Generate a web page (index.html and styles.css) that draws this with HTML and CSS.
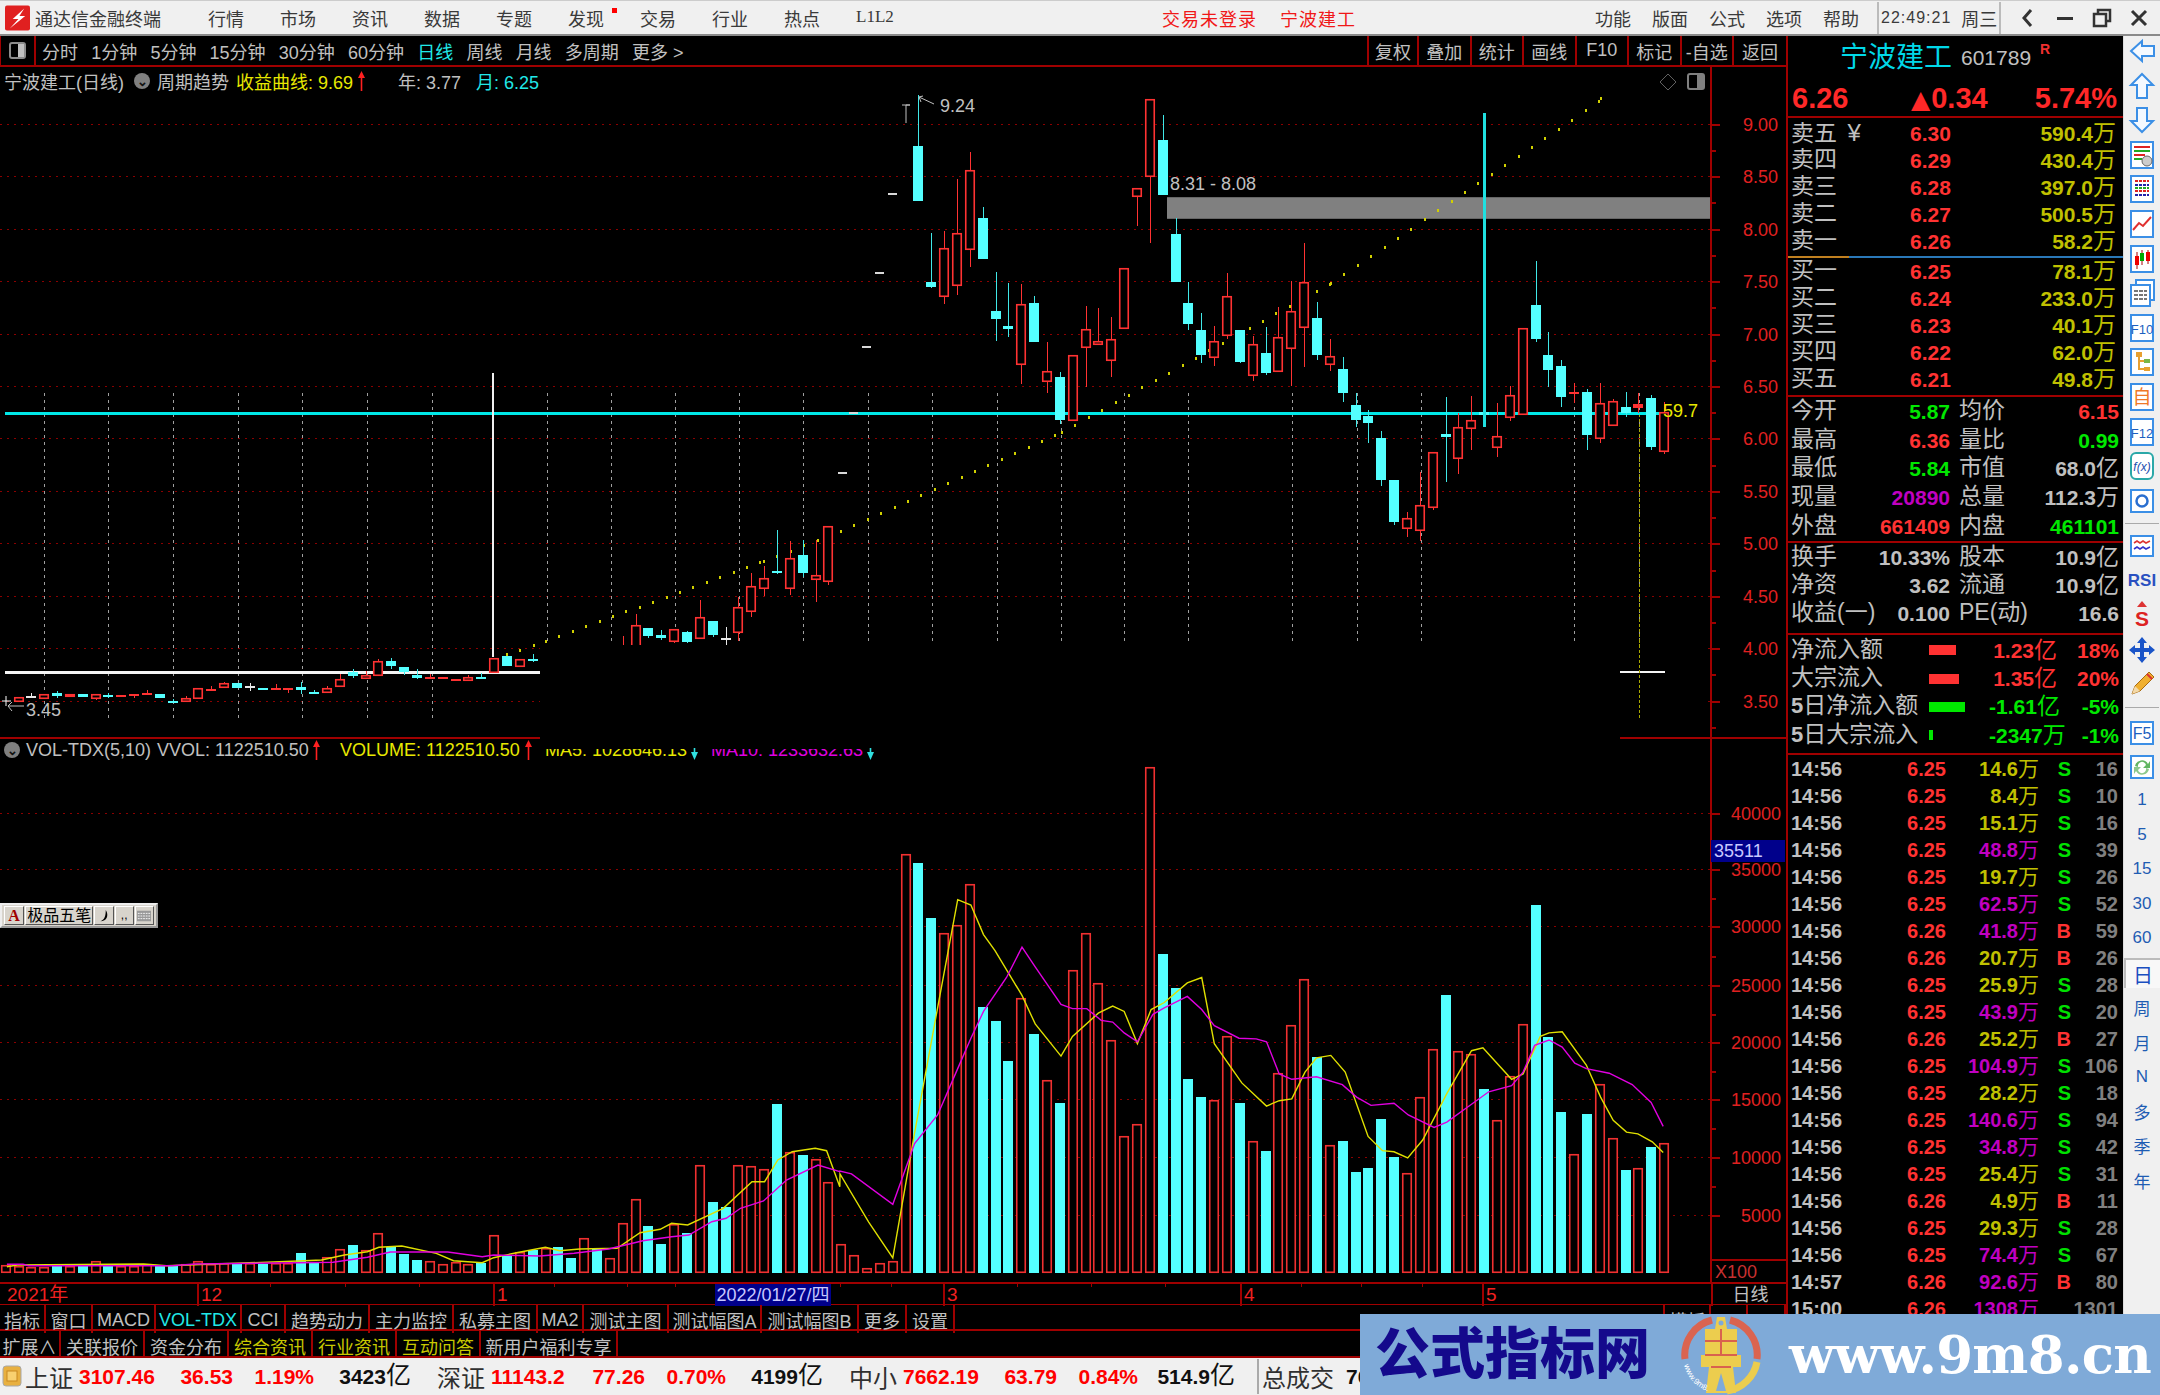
FILE: index.html
```html
<!DOCTYPE html>
<html lang="zh-CN">
<head>
<meta charset="utf-8">
<title>通达信金融终端</title>
<link rel="stylesheet" href="styles.css">
</head>
<body>
<div class="app">
  <header class="titlebar">
    <svg class="logo" viewBox="0 0 26 26"><rect width="26" height="26" rx="2" fill="#e02020"/><path d="M20 3 L8 14 L14 14 L5 24 L21 11 L15 11 Z" fill="#fff"/></svg>
    <span class="brand">通达信金融终端</span>
    <nav class="menus">
      <span>行情</span><span>市场</span><span>资讯</span><span>数据</span><span>专题</span><span class="has-dot">发现<i class="dot"></i></span><span>交易</span><span>行业</span><span>热点</span><span class="serif">L1L2</span>
    </nav>
    <span class="red-title first">交易未登录</span>
    <span class="red-title">宁波建工</span>
    <nav class="menus right">
      <span>功能</span><span>版面</span><span>公式</span><span>选项</span><span>帮助</span>
    </nav>
    <div class="clock"><span class="time">22:49:21</span><span>周三</span></div>
    <div class="winctl">
      <svg viewBox="0 0 20 20"><path d="M13 2 L6 10 L13 18" fill="none" stroke="#333" stroke-width="3"/></svg>
      <svg viewBox="0 0 20 20"><rect x="2" y="9" width="16" height="3" fill="#333"/></svg>
      <svg viewBox="0 0 20 20"><path d="M6 6 V2 H18 V13 H14 M2 6 H14 V18 H2 Z" fill="none" stroke="#333" stroke-width="2.5"/></svg>
      <svg viewBox="0 0 20 20"><path d="M3 3 L17 17 M17 3 L3 17" stroke="#333" stroke-width="3"/></svg>
    </div>
  </header>

  <div class="main">
    <section class="pane">
      <div class="toolbar">
        <div class="tool-icon"><span class="panel-glyph"><i></i></span></div>
        <div class="periods">
          <span>分时</span><span>1分钟</span><span>5分钟</span><span>15分钟</span><span>30分钟</span><span>60分钟</span><span class="cyan">日线</span><span>周线</span><span>月线</span><span>多周期</span><span>更多 &gt;</span>
        </div>
        <div class="tool-cells">
          <span>复权</span><span>叠加</span><span>统计</span><span>画线</span><span>F10</span><span>标记</span><span>-自选</span><span>返回</span>
        </div>
      </div>

      <div class="chart">
        <svg id="plot" class="plot" viewBox="0 67 1786 1215" width="1786" height="1215"></svg>

        <div class="legend top-legend">
          <span class="l-name">宁波建工(日线)</span>
          <span class="chev">⌄</span>
          <span class="l-mode">周期趋势</span>
          <span class="yellow l-curve">收益曲线: 9.69</span>
          <svg class="arrow"><use href="#arrow-up"/></svg>
          <span class="l-year">年: 3.77</span>
          <span class="cyan l-month">月: 6.25</span>
        </div>

        <div class="legend vol-legend">
          <span class="chev">⌄</span>
          <span class="v-name">VOL-TDX(5,10)</span>
          <span class="v-vol">VVOL: 1122510.50</span>
          <svg class="arrow"><use href="#arrow-up"/></svg>
          <span class="yellow v-volume">VOLUME: 1122510.50</span>
          <svg class="arrow"><use href="#arrow-up"/></svg>
          <span class="clipped yellow v-ma5">MA5: 1028646.13</span>
          <svg class="arrow"><use href="#arrow-down"/></svg>
          <span class="clipped magenta v-ma10">MA10: 1233632.63</span>
          <svg class="arrow"><use href="#arrow-down"/></svg>
        </div>

        <div class="ime">
          <span class="ime-cell ime-a">A</span>
          <span class="ime-cell ime-name">极品五笔</span>
          <span class="ime-cell ime-sm"><svg viewBox="0 0 14 16"><path d="M9 1 C13 7 10 14 3 14 C8 12 9 7 9 1 Z" fill="#000"/></svg></span>
          <span class="ime-cell ime-sm">,,</span>
          <span class="ime-cell ime-sm"><svg viewBox="0 0 16 14"><rect x="0" y="1" width="16" height="12" fill="#999"/><path d="M1 4 H15 M1 7 H15 M1 10 H15" stroke="#fff" stroke-dasharray="2 1"/></svg></span>
        </div>
      </div>

      <div class="daterow">
        <span>2021年</span><span>12</span><span>1</span><span class="date-now">2022/01/27/四</span><span class="noline"></span><span>3</span><span>4</span><span>5</span><span class="date-period">日线</span>
      </div>
      <div class="tabs tabs-a">
        <span>指标</span><span>窗口</span><span>MACD</span><span class="cyan">VOL-TDX</span><span>CCI</span><span>趋势动力</span><span>主力监控</span><span>私募主图</span><span>MA2</span><span>测试主图</span><span>测试幅图A</span><span>测试幅图B</span><span>更多</span><span>设置</span><span class="bare"></span><span>模板</span><span></span><span></span>
      </div>
      <div class="tabs tabs-b">
        <span>扩展∧</span><span>关联报价</span><span>资金分布</span><span class="olive">综合资讯</span><span class="olive">行业资讯</span><span class="olive">互动问答</span><span>新用户福利专享</span>
      </div>
    </section>

    <aside class="quote">
      <div class="q-head"><span class="q-name">宁波建工</span><span class="q-code">601789</span><sup class="q-r">R</sup></div>
      <div class="q-price"><span>6.26</span><span><b class="tri">▲</b>0.34</span><span class="q-pct">5.74%</span></div>

      <div class="book book-sell">
        <div class="ob"><span class="lab">卖五 <i class="yen">¥</i></span><b>6.30</b><em>590.4<i>万</i></em></div>
        <div class="ob"><span class="lab">卖四</span><b>6.29</b><em>430.4<i>万</i></em></div>
        <div class="ob"><span class="lab">卖三</span><b>6.28</b><em>397.0<i>万</i></em></div>
        <div class="ob"><span class="lab">卖二</span><b>6.27</b><em>500.5<i>万</i></em></div>
        <div class="ob"><span class="lab">卖一</span><b>6.26</b><em>58.2<i>万</i></em></div>
      </div>
      <div class="mid-line"><i></i></div>
      <div class="book book-buy">
        <div class="ob"><span class="lab">买一</span><b>6.25</b><em>78.1<i>万</i></em></div>
        <div class="ob"><span class="lab">买二</span><b>6.24</b><em>233.0<i>万</i></em></div>
        <div class="ob"><span class="lab">买三</span><b>6.23</b><em>40.1<i>万</i></em></div>
        <div class="ob"><span class="lab">买四</span><b>6.22</b><em>62.0<i>万</i></em></div>
        <div class="ob"><span class="lab">买五</span><b>6.21</b><em>49.8<i>万</i></em></div>
      </div>

      <div class="sec sec-a">
        <div class="ir"><span class="lab">今开</span><b class="g">5.87</b><span class="lab">均价</span><b class="r">6.15</b></div>
        <div class="ir"><span class="lab">最高</span><b class="r">6.36</b><span class="lab">量比</span><b class="g">0.99</b></div>
        <div class="ir"><span class="lab">最低</span><b class="g">5.84</b><span class="lab">市值</span><b>68.0<i>亿</i></b></div>
        <div class="ir"><span class="lab">现量</span><b class="m">20890</b><span class="lab">总量</span><b>112.3<i>万</i></b></div>
        <div class="ir"><span class="lab">外盘</span><b class="r">661409</b><span class="lab">内盘</span><b class="g">461101</b></div>
      </div>
      <div class="sec sec-b">
        <div class="ir"><span class="lab">换手</span><b>10.33%</b><span class="lab">股本</span><b>10.9<i>亿</i></b></div>
        <div class="ir"><span class="lab">净资</span><b>3.62</b><span class="lab">流通</span><b>10.9<i>亿</i></b></div>
        <div class="ir"><span class="lab">收益(一)</span><b>0.100</b><span class="lab">PE(动)</span><b>16.6</b></div>
      </div>
      <div class="sec sec-c">
        <div class="fl"><span class="lab">净流入额</span><span class="barcell"><i class="bar r-bar" style="width:27px"></i></span><b class="r">1.23<i>亿</i></b><b class="r">18%</b></div>
        <div class="fl"><span class="lab">大宗流入</span><span class="barcell"><i class="bar r-bar" style="width:30px"></i></span><b class="r">1.35<i>亿</i></b><b class="r">20%</b></div>
        <div class="fl"><span class="lab"><b>5</b>日净流入额</span><span class="barcell"><i class="bar g-bar" style="width:36px"></i></span><b class="g">-1.61<i>亿</i></b><b class="g">-5%</b></div>
        <div class="fl"><span class="lab"><b>5</b>日大宗流入</span><span class="barcell"><i class="bar g-bar" style="width:4px"></i></span><b class="g">-2347<i>万</i></b><b class="g">-1%</b></div>
      </div>
      <div id="trades" class="trades"></div>
    </aside>

    <aside class="side">
      <div class="si"><svg viewBox="0 0 30 30"><path d="M4 15 L15 5 V10 H27 V20 H15 V25 Z" fill="#f4f9ff" stroke="#3b8fe6" stroke-width="2"/></svg></div>
      <div class="si"><svg viewBox="0 0 30 30"><path d="M15 3 L26 14 H20 V27 H10 V14 H4 Z" fill="#f4f9ff" stroke="#3b8fe6" stroke-width="2"/></svg></div>
      <div class="si"><svg viewBox="0 0 30 30"><path d="M15 27 L26 16 H20 V3 H10 V16 H4 Z" fill="#f4f9ff" stroke="#3b8fe6" stroke-width="2"/></svg></div>
      <div class="si"><svg viewBox="0 0 30 30"><rect x="4" y="2" width="22" height="26" fill="#fff" stroke="#3b8fe6" stroke-width="2"/><path d="M7 7 H23" stroke="#d22" stroke-width="2"/><path d="M7 11 H23" stroke="#2a2" stroke-width="2"/><path d="M7 15 H18" stroke="#d22" stroke-width="2"/><path d="M7 19 H15" stroke="#2a2" stroke-width="2"/><circle cx="20" cy="21" r="5" fill="#ccc" stroke="#666"/></svg></div>
      <div class="si"><svg viewBox="0 0 30 30"><rect x="4" y="2" width="22" height="26" fill="#fff" stroke="#3b8fe6" stroke-width="2"/><path d="M8 7 H22 M8 17 H22" stroke="#d22" stroke-width="2" stroke-dasharray="3 1"/><path d="M8 11 H22 M8 21 H22" stroke="#22a" stroke-width="2" stroke-dasharray="3 1"/><path d="M8 14 H22" stroke="#2a2" stroke-width="2" stroke-dasharray="3 1"/></svg></div>
      <div class="si"><svg viewBox="0 0 30 30"><rect x="4" y="2" width="22" height="26" fill="#fff" stroke="#3b8fe6" stroke-width="2"/><path d="M6 21 L12 14 L16 17 L24 8" fill="none" stroke="#e03030" stroke-width="2"/></svg></div>
      <div class="si"><svg viewBox="0 0 30 30"><rect x="4" y="2" width="22" height="26" fill="#fff" stroke="#3b8fe6" stroke-width="2"/><path d="M10 8 V25 M15 6 V21 M21 6 V20" stroke="#a00"/><rect x="8" y="12" width="4" height="9" fill="#e00"/><rect x="13" y="9" width="4" height="8" fill="#0a0"/><rect x="19" y="8" width="4" height="9" fill="#e00"/></svg></div>
      <div class="si"><svg viewBox="0 0 30 30"><rect x="9" y="2" width="18" height="20" fill="#fff" stroke="#3b8fe6" stroke-width="2"/><rect x="4" y="7" width="19" height="21" fill="#fff" stroke="#3b8fe6" stroke-width="2"/><path d="M7 13 H20 M7 17 H20 M7 21 H20" stroke="#777" stroke-width="2" stroke-dasharray="4 1"/></svg></div>
      <div class="si"><svg viewBox="0 0 30 30"><rect x="4" y="2" width="22" height="26" fill="#fff" stroke="#3b8fe6" stroke-width="2"/><text x="15" y="21" text-anchor="middle" class="si-t">F10</text></svg></div>
      <div class="si"><svg viewBox="0 0 30 30"><rect x="4" y="2" width="22" height="26" fill="#fff" stroke="#3b8fe6" stroke-width="2"/><path d="M12 8 V22 H19 M12 14 H19" fill="none" stroke="#e8a030" stroke-width="2"/><rect x="9" y="5" width="6" height="5" fill="#e8a030"/><rect x="17" y="12" width="6" height="4" fill="#7ab648"/><rect x="17" y="20" width="6" height="4" fill="#e8a030"/></svg></div>
      <div class="si"><svg viewBox="0 0 30 30"><rect x="4" y="2" width="22" height="26" fill="#fff" stroke="#3b8fe6" stroke-width="2"/><text x="15" y="22" text-anchor="middle" class="si-cn">自</text></svg></div>
      <div class="si"><svg viewBox="0 0 30 30"><rect x="4" y="2" width="22" height="26" fill="#fff" stroke="#3b8fe6" stroke-width="2"/><text x="15" y="21" text-anchor="middle" class="si-t">F12</text></svg></div>
      <div class="si"><svg viewBox="0 0 30 30"><rect x="4" y="2" width="22" height="26" rx="5" fill="#fff" stroke="#2aa8a8" stroke-width="2"/><text x="15" y="20" text-anchor="middle" class="si-fx">f(x)</text></svg></div>
      <div class="si"><svg viewBox="0 0 30 30"><rect x="4" y="4" width="22" height="22" fill="#fff" stroke="#3b8fe6" stroke-width="2"/><circle cx="15" cy="15" r="5.5" fill="none" stroke="#2a6fd0" stroke-width="2.5"/></svg></div>
      <div class="si-sep sep-1"></div>
      <div class="si"><svg viewBox="0 0 30 30"><rect x="4" y="5" width="22" height="20" fill="#fff" stroke="#3b8fe6" stroke-width="2"/><path d="M7 12 L10 10 L13 12 L16 10 L19 12 L23 10" fill="none" stroke="#d33" stroke-width="1.6"/><path d="M7 18 L10 16 L13 18 L16 16 L19 18 L23 16" fill="none" stroke="#33c" stroke-width="1.6"/></svg></div>
      <div class="si"><svg viewBox="0 0 30 30"><text x="15" y="21" text-anchor="middle" class="si-rsi">RSI</text></svg></div>
      <div class="si"><svg viewBox="0 0 30 30"><path d="M15 1 L20 7 H10 Z" fill="#d33"/><text x="15" y="26" text-anchor="middle" class="si-s">S</text></svg></div>
      <div class="si"><svg viewBox="0 0 30 30"><path d="M15 2 L20 8 H17 V13 H22 V10 L28 15 L22 20 V17 H17 V22 H20 L15 28 L10 22 H13 V17 H8 V20 L2 15 L8 10 V13 H13 V8 H10 Z" fill="#1a54c8"/></svg></div>
      <div class="si"><svg viewBox="0 0 30 30"><path d="M5 25 L8 17 L22 3 L27 8 L13 22 Z" fill="#f0b030" stroke="#a86a10"/><path d="M5 25 L8 17 L13 22 Z" fill="#f3d9a8"/><path d="M20 5 L25 10" stroke="#d33" stroke-width="2"/></svg></div>
      <div class="si-sep sep-2"></div>
      <div class="si"><svg viewBox="0 0 30 30"><rect x="4" y="4" width="22" height="22" fill="#fff" stroke="#3b8fe6" stroke-width="2"/><text x="15" y="21" text-anchor="middle" class="si-t big">F5</text></svg></div>
      <div class="si"><svg viewBox="0 0 30 30"><rect x="4" y="4" width="22" height="22" fill="#fff" stroke="#3b8fe6" stroke-width="2"/><path d="M8 14 A7 7 0 0 1 21 12 L23 9 V16 H16 L19 13 A4 4 0 0 0 11 15 Z" fill="#62b562"/><path d="M22 17 A7 7 0 0 1 9 19 L7 22 V15 H14 L11 18 A4 4 0 0 0 19 16 Z" fill="#8cc98c"/></svg></div>
      <div class="si num first-num">1</div>
      <div class="si num">5</div>
      <div class="si num">15</div>
      <div class="si num">30</div>
      <div class="si num">60</div>
      <div class="si num active">日</div>
      <div class="si num">周</div>
      <div class="si num">月</div>
      <div class="si num">N</div>
      <div class="si num">多</div>
      <div class="si num">季</div>
      <div class="si num">年</div>
    </aside>
  </div>

  <footer class="status">
    <svg class="st-icon" viewBox="0 0 20 24"><rect x="1" y="2" width="18" height="20" rx="3" fill="#e8b040" stroke="#a8a8a8"/><rect x="5" y="7" width="10" height="10" fill="#f8d070" stroke="#c88820"/></svg>
    <div class="st-group"><span class="st-l">上证</span><b>3107.46</b><b>36.53</b><b>1.19%</b><strong>3423<i>亿</i></strong></div>
    <div class="st-group"><span class="st-l">深证</span><b>11143.2</b><b>77.26</b><b>0.70%</b><strong>4199<i>亿</i></strong></div>
    <div class="st-group"><span class="st-l">中小</span><b>7662.19</b><b>63.79</b><b>0.84%</b><strong>514.9<i>亿</i></strong></div>
    <div class="st-total"><span class="st-l">总成交</span><strong>7629<i>亿</i></strong></div>
  </footer>

  <div class="watermark">
    <span class="wm-cn">公式指标网</span>
    <svg class="wm-logo" viewBox="0 0 80 80">
      <path d="M4 44 A36 36 0 0 1 31 5" fill="none" stroke="#da6450" stroke-width="7"/>
      <path d="M49 5 A36 36 0 0 1 76 44" fill="none" stroke="#da6450" stroke-width="7"/>
      <path d="M76 47 A36 36 0 0 1 46 76" fill="none" stroke="#eccd4e" stroke-width="7"/>
      <path d="M36 2 H44 L46 14 H56 V40 H60 V52 H52 L55 78 H25 L28 52 H20 V40 H24 V14 H34 Z" fill="#eccd4e"/>
      <path d="M24 26 H56 M24 40 H56 M30 52 H50 M40 14 V40" stroke="#d9614e" stroke-width="2"/>
      <path d="M40 58 L45 76 H35 Z" fill="#7faad8"/>
      <circle cx="40" cy="8" r="2.5" fill="#7faad8"/>
      <path id="wm-text-arc" d="M3 50 A37 37 0 0 0 26 76" fill="none"/>
      <text class="wm-small"><textPath href="#wm-text-arc">www.9m8.cn</textPath></text>
    </svg>
    <span class="wm-url">www.9m8.cn</span>
  </div>
</div>

<svg class="defs" aria-hidden="true">
  <symbol id="arrow-up" viewBox="0 0 9 20"><path d="M4.5 0 L8 7 H5.3 V20 H3.7 V7 H1 Z" fill="#ff2020"/></symbol>
  <symbol id="arrow-down" viewBox="0 0 9 20"><path d="M3.7 8 H5.3 V12 H8 L4.5 20 L1 12 H3.7 Z" fill="#30e0e0"/></symbol>
</svg>
<script src="chart.js"></script>
</body>
</html>
```
FILE: styles.css
```css
* { box-sizing: border-box; }
html, body { margin: 0; padding: 0; background: #000; }
body { font-family: "Liberation Sans", "Noto Sans CJK SC", sans-serif; color: #c0c0c0; }
i, em { font-style: normal; }
.defs { position: absolute; width: 0; height: 0; }
.app { position: relative; width: 2160px; height: 1395px; overflow: hidden; display: flex; flex-direction: column; }

/* title bar */
.titlebar { height: 36px; flex: none; display: flex; align-items: center; background: #f0f0f0; border-top: 1px solid #ccc; border-bottom: 2px solid #8a8a8a; color: #3a3a3a; font-size: 18px; white-space: nowrap; }
.logo { width: 25px; height: 26px; margin-left: 5px; flex: none; }
.brand { width: 126px; margin-left: 5px; letter-spacing: 0; }
.menus { display: flex; gap: 36px; margin-left: 47px; }
.menus span { width: 36px; position: relative; }
.menus.right { margin-left: 239px; gap: 21px; }
.serif { font-family: "Liberation Serif", serif; font-size: 17px; padding-top: 2px; }
.has-dot .dot { position: absolute; left: 44px; top: 3px; width: 5px; height: 5px; background: #f00; }
.red-title { color: #f01818; letter-spacing: 1px; margin-left: 23px; }
.red-title.first { margin-left: 270px; }
.clock { display: flex; align-items: center; height: 32px; margin-left: 18px; border-left: 2px solid #bbb; border-right: 2px solid #bbb; padding-left: 2px; width: 124px; gap: 10px; }
.time { font-size: 16px; letter-spacing: 1px; }
.winctl { display: flex; gap: 17px; margin-left: 17px; align-items: center; }
.winctl svg { width: 20px; height: 20px; }

/* main */
.main { display: flex; height: 1322px; flex: none; }
.pane { width: 1786px; flex: none; display: flex; flex-direction: column; }

.toolbar { height: 31px; flex: none; display: flex; align-items: center; border-bottom: 2px solid #a00000; font-size: 18px; white-space: nowrap; }
.tool-icon { width: 36px; height: 100%; border-left: 1px solid #a00000; border-right: 2px solid #a00000; display: flex; align-items: center; justify-content: center; }
.panel-glyph { width: 17px; height: 17px; border: 2px solid #8c8c8c; border-radius: 3px; display: block; position: relative; }
.panel-glyph i { position: absolute; right: 0; top: 0; bottom: 0; width: 6px; background: #c0c0c0; }
.periods { display: flex; gap: 13.2px; margin-left: 6px; }
.tool-cells { display: flex; height: 100%; margin-left: auto; }
.tool-cells span { width: 52.5px; height: 100%; border-left: 2px solid #a00000; display: flex; align-items: center; justify-content: center; }
.tool-cells span:nth-child(1) { width: 50px; }
.tool-cells span:last-child { width: 54px; }
.cyan { color: #20e8e8; }
.yellow { color: #e8e800; }
.magenta { color: #e000e0; }
.olive { color: #c8c800; }

/* chart */
.chart { position: relative; height: 1215px; flex: none; }
.plot { display: block; overflow: visible; }
.legend { position: absolute; left: 0; display: flex; align-items: center; white-space: nowrap; font-size: 18px; height: 22px; }
.top-legend { top: 3px; }
.vol-legend { top: 672px; }
.chev { width: 16px; height: 16px; border-radius: 50%; background: #808080; color: #111; display: flex; align-items: center; justify-content: center; font-size: 13px; line-height: 1; font-weight: bold; }
.arrow { width: 9px; height: 20px; flex: none; }
.l-name { margin-left: 4px; width: 126px; }
.top-legend .chev { margin-left: 4px; }
.l-mode { margin-left: 7px; width: 79px; }
.l-curve { width: 121px; }
.l-year { margin-left: 32px; width: 78px; }
.vol-legend .chev { margin-left: 4px; }
.v-name { margin-left: 6px; width: 131px; }
.v-vol { width: 155px; }
.v-volume { margin-left: 19px; width: 184px; }
.v-ma5 { margin-left: 12px; width: 145px; }
.v-ma10 { margin-left: 12px; width: 155px; }
.clipped { clip-path: inset(45% 0 0 0); }

.ime { position: absolute; left: 0; top: 836px; width: 158px; height: 25px; background: #d8d4cc; border: 2px outset #eee; display: flex; gap: 1px; padding: 1px 2px; color: #000; font-size: 16px; }
.ime-cell { display: flex; align-items: center; justify-content: center; border: 1px solid; border-color: #fff #555 #555 #fff; height: 19px; line-height: 17px; }
.ime-a { width: 21px; color: #a00000; font-family: "Liberation Serif", serif; font-weight: bold; }
.ime-name { width: 71px; white-space: nowrap; }
.ime-sm { width: 20px; font-size: 12px; }
.ime-sm svg { width: 14px; height: 14px; }

/* date row and tabs */
.daterow { height: 23px; flex: none; display: grid; grid-template-columns: 197px 296px 222px 116px 112px 297px 242px 229px 75px; border-top: 2px solid #a00000; border-bottom: 1px solid #a00000; font-size: 19px; color: #f02020; line-height: 22px; white-space: nowrap; }
.daterow span { padding-left: 2px; border-left: 2px solid #a00000; }
.daterow span:first-child { border-left: 0; padding-left: 7px; }
.daterow .noline { border-left: 0; }
.daterow .date-now { background: #00008b; color: #c8c8ff; font-size: 18px; padding-left: 0; border-left: 0; text-align: center; }
.daterow .date-period { color: #c0c0c0; text-align: center; font-size: 18px; }
.tabs { display: grid; flex: none; font-size: 18px; white-space: nowrap; border-bottom: 2px solid #a00000; }
.tabs span { display: flex; align-items: center; justify-content: center; border-right: 2px solid #a00000; padding-top: 2px; }
.tabs-a { height: 26px; grid-template-columns: 46px 47px 63px 86px 44px 84px 84px 84px 46px 85px 93px 97px 48px 48px 1fr 46px 37px 38px; }
.tabs-b { height: 27px; grid-template-columns: 61px 84px 84px 84px 84px 84px 137px; }

/* quote panel */
.quote { width: 337px; flex: none; border-left: 2px solid #a00000; overflow: hidden; }
.q-head { height: 37px; display: flex; align-items: center; padding-left: 52px; white-space: nowrap; }
.q-name { font-size: 28px; color: #00d8e8; width: 121px; }
.q-code { font-size: 21px; color: #c0c0c0; width: 79px; padding-top: 6px; }
.q-r { font-size: 14px; color: #f03030; font-weight: bold; align-self: flex-start; margin-top: 5px; }
.q-price { height: 45px; display: grid; grid-template-columns: 119px 100px 1fr; align-items: center; padding: 7px 6px 0 4px; border-bottom: 2px solid #a00000; color: #ff2828; font-weight: bold; font-size: 29px; white-space: nowrap; }
.tri { font-size: 25px; font-family: "DejaVu Sans", sans-serif; margin-right: 1px; }
.q-pct { text-align: right; }

.lab { font-size: 23px; color: #c0c0c0; white-space: nowrap; line-height: 1; font-weight: 400; margin-bottom: 2px; }
.lab b { font-size: 22px; font-weight: bold; }
.yen { margin-left: 4px; color: #c0c0c0; font-size: 24px; }
.book-sell { height: 138px; padding-top: 2px; }
.book-buy { height: 137px; }
.ob { height: 27px; display: grid; grid-template-columns: 119px 60px 1fr; grid-template-rows: 27px; padding: 0 7px 0 3px; align-items: center; font-size: 21px; line-height: 1; white-space: nowrap; }
.ob b { color: #ff3232; }
.ob em { color: #c0c000; text-align: right; font-weight: bold; }
.ob em i, .ir b i, .fl b i { font-weight: 400; font-size: 23px; line-height: 0; }
.mid-line { height: 2px; background: #2a78b8; }
.mid-line i { display: block; height: 2px; width: 61px; background: #c08020; }
.sec { border-top: 2px solid #a00000; }
.sec-a { height: 146px; }
.sec-b { height: 92px; }
.sec-c { padding-top: 1px; height: 120px; }
.ir { height: 28.7px; display: grid; grid-template-columns: 50px 109px 59px 1fr; grid-template-rows: 28.7px; padding: 0 4px 0 3px; align-items: center; font-size: 21px; line-height: 1; white-space: nowrap; }
.sec-b .ir { height: 28.4px; grid-template-rows: 28.4px; }
.ir b { text-align: right; color: #c0c0c0; }
.ir .lab:nth-child(3) { margin-left: 9px; }
b.r { color: #ff3232; }
b.g { color: #00e800; }
b.m { color: #c000c0; }
.fl { height: 28.4px; display: grid; grid-template-columns: 138px 60px 68px 62px; grid-template-rows: 28.4px; padding-left: 3px; align-items: center; font-size: 21px; line-height: 1; white-space: nowrap; }
.fl b { text-align: right; }
.barcell { display: flex; align-items: center; }
.bar { display: block; height: 10px; }
.r-bar { background: #ff3232; }
.g-bar { background: #00e800; }

.trades { border-top: 2px solid #a00000; }
.tr { height: 27px; display: grid; grid-template-columns: 100px 55px 93px 42px 37px; grid-template-rows: 27px; padding-left: 3px; align-items: center; font-size: 20px; font-weight: bold; line-height: 1; white-space: nowrap; }
.tr span { text-align: right; }
.tr span:first-child { text-align: left; color: #c0c0c0; }
.tr .px { color: #ff3232; }
.tr .vy { color: #c0c000; }
.tr .vm { color: #c000c0; }
.tr .vy i, .tr .vm i { font-weight: 400; font-size: 21px; line-height: 0; }
.tr .sd { padding-right: 10px; }
.tr .s { color: #00e000; }
.tr .b { color: #ff3232; }
.tr .ct { color: #808080; justify-self: end; }

/* side strip */
.side { width: 37px; flex: none; background: #f0f0f0; display: flex; flex-direction: column; gap: 4.6px; border-left: 1px solid #ddd; }
.si { height: 30px; flex: none; display: flex; align-items: center; justify-content: center; }
.si svg { width: 30px; height: 30px; }
.si-t { font: 13px "Liberation Sans", sans-serif; fill: #1c5fc0; }
.si-t.big { font-size: 16px; }
.si-cn { font: 19px "Noto Sans CJK SC", sans-serif; fill: #f07828; }
.si-fx { font: italic 12px "Liberation Sans", sans-serif; fill: #1c4fb0; }
.si-rsi { font: bold 17px "Liberation Sans", sans-serif; fill: #2a50c0; }
.si-s { font: bold 21px "Liberation Sans", sans-serif; fill: #d22; }
.si-sep { height: 1px; flex: none; background: #aaa; margin: 0 1px; }
.sep-1 { margin-top: 2.6px; margin-bottom: 2.4px; }
.sep-2 { margin-top: 3px; margin-bottom: 5.4px; }
.num { color: #1e5cb3; font-size: 17px; }
.first-num { margin-top: -2px; }
.num.active { font-size: 20px; background: #f8f8f8; border-top: 2px solid #bbb; border-left: 2px solid #bbb; color: #1a4fc0; }

/* status bar */
.status { height: 37px; flex: none; display: flex; align-items: center; background: #f0f0f0; color: #ff0000; font-size: 21px; white-space: nowrap; padding-left: 25px; position: relative; }
.st-icon { position: absolute; left: 2px; top: 6px; width: 20px; height: 24px; }
.st-group { display: grid; grid-template-columns: 54px 76px 78px 81px 97px; margin-right: 26px; align-items: center; }
.st-group b, .st-group strong { text-align: right; }
.st-group b:nth-child(2) { text-align: left; }
.st-l { font-size: 24px; color: #303030; font-weight: 400; }
.status strong { color: #101010; line-height: 1; }
.status strong i { font-weight: 400; font-size: 25px; line-height: 0; }
.st-total { display: flex; gap: 12px; align-items: center; border-left: 2px solid #aaa; padding-left: 3px; margin-left: -4px; }

/* watermark */
.watermark { position: absolute; left: 1360px; bottom: 0; width: 800px; height: 81px; background: #7faad8; display: flex; align-items: center; }
.wm-cn { margin-left: 15px; width: 298px; font-size: 55px; font-weight: 900; color: #14098c; white-space: nowrap; line-height: 1; }
.wm-logo { width: 80px; height: 80px; margin-left: 8px; flex: none; }
.wm-small { font: 8px "Liberation Sans", sans-serif; fill: #fff; }
.wm-url { margin-left: 28px; font-family: "DejaVu Serif", serif; font-weight: bold; font-size: 53px; color: #fff; white-space: nowrap; line-height: 1; letter-spacing: -0.7px; }
```
FILE: chart.js
```js
(function () {
  var NS = 'http://www.w3.org/2000/svg';
  var svg = document.getElementById('plot');
  function el(tag, a, txt) {
    var e = document.createElementNS(NS, tag);
    for (var k in a) e.setAttribute(k, a[k]);
    if (txt != null) e.textContent = txt;
    svg.appendChild(e);
    return e;
  }
  function rect(x, y, w, h, fill) {
    return el('rect', { x: x, y: y, width: w, height: h, fill: fill, 'shape-rendering': 'crispEdges' });
  }
  function outlined(x, y, w, h, stroke) {
    return el('rect', { x: x + .75, y: y + .75, width: w - 1.5, height: Math.max(h - 1.5, 0), fill: '#000', stroke: stroke, 'stroke-width': 1.6 });
  }
  function hline(x1, x2, y, c, w, dash) {
    var a = { x1: x1, x2: x2, y1: y, y2: y, stroke: c, 'stroke-width': w || 1, 'shape-rendering': 'crispEdges' };
    if (dash) a['stroke-dasharray'] = dash;
    return el('line', a);
  }
  function vline(x, y1, y2, c, w, dash) {
    var a = { x1: x, x2: x, y1: y1, y2: y2, stroke: c, 'stroke-width': w || 1, 'shape-rendering': 'crispEdges' };
    if (dash) a['stroke-dasharray'] = dash;
    return el('line', a);
  }
  function label(x, y, s, c, anchor, size) {
    return el('text', { x: x, y: y, fill: c, 'text-anchor': anchor || 'start', 'font-size': size || 18, 'dominant-baseline': 'central', 'font-family': 'Liberation Sans, sans-serif' }, s);
  }

  var RED = '#ff3232', CY = '#54ffff', DRED = '#a00000', AXIS = '#e02020';
  var AX = 1711;
  function cx(n) { return Math.round(18.5 + 12.857 * n); }
  function py(p) { return 123.7 + (9 - p) * 104.9; }

  // price grid
  for (var i = 0; i <= 11; i++) {
    var p = 9 - i * 0.5, y = Math.round(py(p));
    hline(0, AX, y + .5, '#8b0000', 1.4, '2 5');
    hline(AX, AX + 9, y + .5, DRED, 2);
    hline(AX, AX + 5, Math.round(py(p - 0.25)) + .5, DRED, 2);
    label(1778, y + 1, p.toFixed(2), AXIS, 'end');
  }
  // period dashes
  [44, 108, 173, 238, 302, 367, 432, 547, 611, 675, 739, 803, 868, 932, 997, 1061, 1124, 1188, 1292, 1357, 1421, 1574, 1639].forEach(function (d) {
    vline(d + .5, 393, d < 540 ? 719 : 643, '#a0a0a0', 1, '3 4');
  });
  vline(1639.5, 414, 720, '#a8a800', 1, '3 2');

  // gray band
  rect(1167, 197, 543, 22, '#808080');
  rect(1167, 197, 543, 1, '#666');
  rect(1167, 218, 543, 1, '#666');

  // cyan line and white line behind the candles
  rect(5, 412, 1658, 3, '#00e8e8');
  rect(5, 671, 535, 3, '#f4f4f4');

  // trend dots
  var tp = [[506, 653], [545, 640], [763, 560], [840, 530], [1061, 431], [1330, 282], [1600, 99]];
  for (var t = 0; t < tp.length - 1; t++) {
    var a = tp[t], b = tp[t + 1];
    for (var x = a[0]; x < b[0]; x += 13.4) {
      rect(Math.round(x), a[1] + (b[1] - a[1]) * (x - a[0]) / (b[0] - a[0]), 2, 3, '#d0d000');
    }
  }
  rect(1600, 97, 2, 3, '#d0d000');

  // candles: kind, body top, body bottom, wick top, wick bottom
  var C9 = [['r',410,425],['w',407,410,400,415],['r',402,416],['c',399,409,394,413],['r',402,411],['c',401,412],['r',402,416,402,420],['c',405,408,399,413],['f',405,412],['f',402,408,402,413],['f',400,403,391,403],['c',401,413],['c',423,426,418,430],['r',414,425,408,425],['r',383,416],['f',387,394,378,394],['r',369,385,365,385],['c',369,385],['w',379,381,368,392],['c',383,385,383,390],['f',383,390,373,390],['f',383,389,383,400],['c',382,390,365,402],['c',396,399,391,399],['r',383,398,378,398],['r',356,380,341,380],['c',337,349,327,355],['r',344,358,333,358],['r',302,349,297,349],['c',302,318,295,327],['c',320,336,320,344],['c',346,354,328,358],['f',351,358,341,358],['f',351,358],['f',356,363],['r',352,362,346,362],['c',351,353,339,356],['r',293,340],['c',288,318],['r',298,322],['c',296,299,283,305],0,0,0,0,0,0,['r',300,320,228,320],['r',195,300,163,300],['c',203,229,203,233],['c',225,233,211,240],['r',208,245,208,250],['c',216,247,212,250],['r',172,237,121,237],['c',184,224,184,232],['w',235,238,202,260],['r',140,218,112,243],['r',77,155,40,170],['r',55,88,17,108],['c',32,38,-90,43],['r',-6,88,-57,105],['c',-15,38,-60,50],['r',46,61,-60,125],['r',-102,66,-102,75]];
  var C8 = [['c',197,362,45,362],['c',607,620,458,624],['r',504,650,454,672],['r',459,618,296,646],['r',270,510,215,560],['c',413,538,381,538],['c',692,718,575,782],['c',737,746,610,772],['r',671,856,611,912],['c',670,786,647,786],['r',873,907,786,940],['c',890,1020,876,1033],['r',824,1024],['r',747,803,678,920],['r',783,794,683,794],['r',778,843,710,890],['r',563,748],['r',324,352,324,438],['r',58,290,58,488],['c',179,345,106,345],['c',462,606,415,606],['c',670,732,606,750],['c',751,826,700,850],['r',783,835,738,858],['r',649,767,580,778],['c',751,845,751,848],['r',792,888,768,902],['c',818,880,742,884],['r',770,875,680,875],['r',693,807,604,918],['r',607,745,490,862],['c',715,826,665,840],['r',829,856,778,872],['c',868,939,832,966],['c',976,1020,938,1040],['c',1007,1029,990,1090],['c',1075,1200,1052,1218],['c',1201,1326,1201,1335],['r',1315,1347,1296,1370],['r',1274,1352,1175,1382],['r',1117,1285,1117,1290],['c',1062,1070,952,1205],['r',1040,1136,998,1182],['r',1021,1046,948,1110],['c',997,1005,997,1042],['r',1067,1105,970,1132],['r',945,1015,918,1022],['r',743,1005],['c',674,777,543,785],['c',824,871,755,920],['c',859,952,840,980],['f',936,943,908,968],['c',936,1065,926,1110],['r',968,1077,908,1088],['r',964,1037,958,1037],['c',981,1000,935,1012],['f',972,984,940,1000],['c',954,1101,944,1110],['r',995,1117,965,1122]];

  function candle(n, d, y0) {
    if (!d) return;
    var x = cx(n), kind = d[0];
    var t = Math.round(y0 + d[1] / 3), bot = Math.round(y0 + d[2] / 3);
    var wt = d[3] == null ? t : Math.round(y0 + d[3] / 3);
    var wb = d[4] == null ? bot : Math.round(y0 + d[4] / 3);
    var col = kind === 'c' ? '#40e8e8' : kind === 'w' ? '#e8e8e8' : RED;
    rect(x, wt, 1, Math.max(wb - wt, 1), col);
    if (kind === 'c') rect(x - 5, t, 10, Math.max(bot - t, 2), CY);
    else if (kind === 'f') rect(x - 5, t, 10, Math.max(bot - t, 2), RED);
    else if (kind === 'w') rect(x - 5, t, 10, 2, col);
    else outlined(x - 5, t, 10, bot - t, RED);
  }
  C9.forEach(function (d, i) { candle(i, d, 560); });
  C8.forEach(function (d, i) { candle(i + 70, d, 80); });

  // the long pin of the candle at index 114
  rect(cx(114) - 1, 113, 3, 314, '#20e0e0');

  // white pin
  rect(492, 373, 2, 284, '#f0f0f0');

  // loose price dashes
  [[888, 193], [875, 272], [862, 346], [838, 472], [849, 412]].forEach(function (q) { rect(q[0], q[1], 9, 2, '#d8d8d8'); });

  // masked strip (empty black band across the lower chart)
  rect(540, 645, 1168, 92, '#000');
  hline(0, 540, 737.5, DRED, 2);
  hline(1620, 1786, 737.5, DRED, 2);
  rect(1620, 671, 45, 2, '#f4f4f4');
  vline(1639.5, 640, 720, '#a8a800', 1, '3 2');

  // axis line
  vline(1711, 67, 1282, DRED, 2);

  // chart annotations
  label(1170, 184, '8.31 - 8.08', '#c0c0c0');
  label(940, 106, '9.24', '#c0c0c0');
  el('path', { d: 'M906 105 H910 H902 M906 105 V123', stroke: '#c0c0c0', fill: 'none', 'stroke-width': 1 });
  el('path', { d: 'M919 97 L921 102 M919 97 L934 104 M919 97 L923 96', stroke: '#c0c0c0', fill: 'none', 'stroke-width': 1 });
  label(26, 710, '3.45', '#c0c0c0');
  el('path', { d: 'M6 696 V706 M2 701 H11', stroke: '#fff', fill: 'none', 'stroke-width': 1 });
  el('path', { d: 'M24 706 H8 L12 702 M8 706 L12 711', stroke: '#c0c0c0', fill: 'none', 'stroke-width': 1 });
  label(1663, 411, '59.7', '#e8e800');

  // panel corner glyphs
  el('path', { d: 'M1668 74 L1676 82 L1668 90 L1660 82 Z', stroke: '#606060', fill: 'none' });
  el('rect', { x: 1688, y: 74, width: 16, height: 15, rx: 2, stroke: '#808080', 'stroke-width': 2, fill: '#000' });
  rect(1697, 75, 6, 13, '#808080');

  // volume panel
  var vg = [812.5, 869, 926, 985, 1042, 1099, 1157, 1215], vl = [40000, 35000, 30000, 25000, 20000, 15000, 10000, 5000];
  vg.forEach(function (y, i) {
    y = Math.round(y);
    hline(0, AX, y + .5, '#8b0000', 1.4, '2 5');
    hline(AX, AX + 9, y + .5, DRED, 2);
    if (i < 7) hline(AX, AX + 5, Math.round((vg[i] + vg[i + 1]) / 2) + .5, DRED, 2);
    label(1781, y + 1, String(vl[i]), AXIS, 'end');
  });
  rect(1711, 840, 74, 22, '#00008b');
  label(1714, 851, '35511', '#c8c8ff');
  hline(1711, 1786, 1260, DRED, 2);
  label(1715, 1272, 'X100', '#c83030');

  var BASE = 1272;
  var V11 = ['r1095','r1098','r1100','r1100','c1098','r1098','c1098','r1082','c1098','r1098','r1098','r1092','c1098','c1098','r1092','r1082','r1092','r1088','c1090','r1090','c1092','r1088','r1088','c1058','c1085','r1070','r1046','c1036','r1050','r1000','c1040','c1063','c1081','r1082','r1092','r1085','r1092','c1090','r1006','c1066','r1055','c1050','r1045','c1041','c1073','r1015','c1045','r1073','r970','r898','c978','c1031','r972','c1000','r795','c906','c920','r795','r799','r808','c613','r755','c766','r776','r845','r1033','r1064','r1105','r1088','r1082'];
  var V10 = ['r320','c344','c499','r541','r517','r404','c747','c786','c899','r722','c823','r951','c1016','r643','r539','r681','r841','r1110','r1076','r76','c600','c693','c948','c1000','r1009','r828','c1016','r1122','c1151','r933','r799','r668','c887','r1135','c1122','c1209','c1197','c1062','c1168','r1211','r1000','r866','c714','r870','r878','c978','r1064','r940','r795','c461','c832','c1042','r1160','c1046','r962','r1115','c1205','r1198','c1139','r1127'];
  function vbar(n, s, toY) {
    var kind = s[0], y = Math.round(toY(+s.slice(1))), x = cx(n);
    if (kind === 'c') rect(x - 5, y, 10, BASE + 1 - y, CY);
    else outlined(x - 5, y, 10, BASE + 1 - y, '#f03030');
  }
  V11.forEach(function (s, i) { vbar(i - 1, s, function (v) { return 900 + v / 3; }); });
  V10.forEach(function (s, i) { vbar(i + 69, s, function (v) { return 740 + v / 2.8; }); });

  function poly(pts11, pts10, color) {
    var o = pts11.map(function (q) { return (q[0] / 1.742).toFixed(1) + ',' + (900 + q[1] / 3).toFixed(1); })
      .concat(pts10.map(function (q) { return (840 + q[0] / 1.742).toFixed(1) + ',' + (740 + q[1] / 2.8).toFixed(1); }));
    el('polyline', { points: o.join(' '), fill: 'none', stroke: color, 'stroke-width': 1.4 });
  }
  poly([[12,1100],[30,1095],[250,1092],[290,1097],[520,1083],[560,1080],[600,1065],[640,1055],[660,1042],[700,1038],[760,1060],[790,1082],[840,1088],[860,1073],[900,1058],[950,1042],[975,1052],[1010,1047],[1075,1045],[1115,998],[1150,988],[1170,970],[1198,975],[1260,925],[1310,845],[1332,845],[1355,780],[1380,755],[1420,745],[1440,752],[1463,860]],
    [[0,1215],[50,1350],[92,1450],[130,1100],[170,750],[205,447],[228,462],[250,545],[270,590],[317,715],[340,795],[385,885],[405,830],[450,765],[475,745],[495,760],[518,850],[542,755],[565,735],[605,680],[630,665],[652,850],[700,960],[743,1025],[765,1010],[787,1005],[810,930],[830,890],[855,883],[880,930],[920,1110],[945,1150],[965,1153],[989,1170],[1015,1120],[1057,990],[1100,870],[1120,862],[1170,950],[1190,935],[1220,830],[1235,820],[1258,817],[1300,910],[1325,1000],[1347,1065],[1370,1098],[1390,1103],[1415,1125],[1434,1155]], '#e0e000');
  poly([[12,1093],[40,1093],[50,1097],[300,1097],[340,1092],[520,1088],[580,1087],[640,1072],[680,1056],[780,1056],[840,1070],[860,1065],[940,1068],[1000,1060],[1060,1047],[1120,1022],[1170,1010],[1200,1005],[1240,965],[1265,955],[1290,925],[1330,903],[1370,840],[1425,795],[1463,815]],
    [[0,1207],[20,1215],[92,1300],[130,1130],[170,1050],[205,920],[228,835],[250,760],[290,665],[317,580],[340,635],[385,740],[405,752],[430,752],[455,785],[475,790],[495,820],[518,845],[545,768],[565,750],[605,718],[630,755],[652,800],[695,835],[725,837],[743,845],[765,935],[787,950],[830,943],[875,965],[900,1000],[925,1023],[965,1017],[990,1050],[1035,1085],[1057,1070],[1100,1020],[1130,985],[1170,968],[1190,930],[1210,855],[1235,840],[1258,860],[1280,905],[1300,920],[1340,933],[1380,965],[1413,1015],[1434,1082]], '#e000e0');

  // month ticks under the baseline
  [270, 345, 419, 554, 627, 675, 840, 891, 1017, 1091, 1165, 1301, 1361, 1422].forEach(function (x) { vline(x, 1283, 1287, DRED, 1); });

  // tick list (time, price, volume, colour, side, count)
  var T = ['14:56 6.25 14.6 y S 16','14:56 6.25 8.4 y S 10','14:56 6.25 15.1 y S 16','14:56 6.25 48.8 m S 39','14:56 6.25 19.7 y S 26','14:56 6.25 62.5 m S 52','14:56 6.26 41.8 m B 59','14:56 6.26 20.7 y B 26','14:56 6.25 25.9 y S 28','14:56 6.25 43.9 m S 20','14:56 6.26 25.2 y B 27','14:56 6.25 104.9 m S 106','14:56 6.25 28.2 y S 18','14:56 6.25 140.6 m S 94','14:56 6.25 34.8 m S 42','14:56 6.25 25.4 y S 31','14:56 6.26 4.9 y B 11','14:56 6.25 29.3 y S 28','14:56 6.25 74.4 m S 67','14:57 6.26 92.6 m B 80','15:00 6.26 1308 m - 1301'];
  document.getElementById('trades').innerHTML = T.map(function (r) {
    var f = r.split(' ');
    return '<div class="tr"><span>' + f[0] + '</span><span class="px">' + f[1] + '</span><span class="v' + f[3] + '">' + f[2] + '<i>万</i></span><span class="sd ' + f[4].toLowerCase() + '">' + (f[4] === '-' ? '' : f[4]) + '</span><span class="ct">' + f[5] + '</span></div>';
  }).join('');
})();
```
